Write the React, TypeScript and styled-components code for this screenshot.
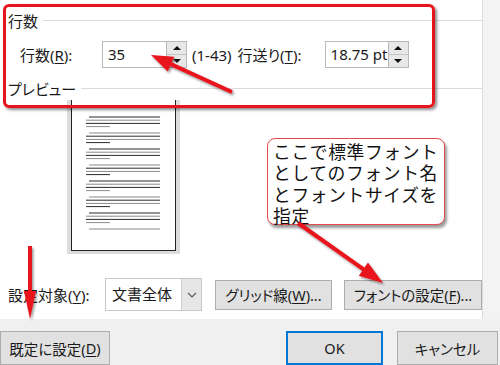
import styled, { createGlobalStyle } from 'styled-components';

const GlobalStyle = createGlobalStyle`
  html, body {
    margin: 0;
    padding: 0;
    background: #f0f0f0;
  }
  * {
    box-sizing: border-box;
  }
`;

const Window = styled.div`
  position: relative;
  width: 500px;
  height: 365px;
  overflow: hidden;
  display: flex;
  flex-direction: column;
  font-family: "Noto Sans", "Noto Sans CJK JP", sans-serif;
  font-feature-settings: "palt";
  font-size: 15px;
  color: #1a1a1a;
  background: #f0f0f0;
`;

const Body = styled.div`
  display: flex;
  height: 321px;
`;

const Panel = styled.div`
  width: 483px;
  height: 100%;
  background: #fff;
  border-right: 1px solid #dcdcdc;
  padding: 12px 0 0 8px;
  display: flex;
  flex-direction: column;
`;

const Strip = styled.div`
  flex: 1;
  background: #f3f3f3;
`;

const GroupHeader = styled.div<{ $top?: number }>`
  display: flex;
  align-items: center;
  gap: 5px;
  height: 16px;
  margin-top: ${(p) => p.$top ?? 0}px;
  white-space: nowrap;
  &::after {
    content: '';
    flex: 1;
    height: 1px;
    background: #dcdcdc;
  }
`;

const FieldRow = styled.div`
  display: flex;
  align-items: center;
  height: 27px;
  margin-top: 13px;
  padding-left: 12px;
`;

const Label = styled.span<{ $width?: number; $gap?: number }>`
  width: ${(p) => (p.$width ? `${p.$width}px` : 'auto')};
  margin-left: ${(p) => p.$gap ?? 0}px;
  white-space: nowrap;
  flex-shrink: 0;
`;

const Key = styled.span`
  text-decoration: underline;
  text-underline-offset: 2px;
`;

const Spin = styled.div<{ $width: number }>`
  display: flex;
  width: ${(p) => p.$width}px;
  height: 27px;
  flex-shrink: 0;
`;

const SpinInput = styled.div`
  flex: 1;
  border: 1px solid #b9b9b9;
  border-right: none;
  background: #fff;
  font-size: 15px;
  line-height: 25px;
  padding-left: 5px;
  white-space: nowrap;
`;

const SpinButtons = styled.div`
  width: 21px;
  display: flex;
  flex-direction: column;
  border: 1px solid #b9b9b9;
`;

const SpinButton = styled.div<{ $down?: boolean }>`
  flex: 1;
  background: #e8e8e8;
  border-top: ${(p) => (p.$down ? '1px solid #c4c4c4' : 'none')};
  display: flex;
  align-items: center;
  justify-content: center;
  &::before {
    content: '';
    border-left: 4px solid transparent;
    border-right: 4px solid transparent;
    ${(p) =>
      p.$down ? 'border-top: 4px solid #111;' : 'border-bottom: 4px solid #111;'}
  }
`;

const PreviewFrame = styled.div`
  margin: 4px 0 0 59px;
  width: 113px;
  height: 154px;
  background: #dcdcdc;
  padding: 0 4px 3px 4px;
`;

const PreviewPage = styled.div`
  width: 100%;
  height: 100%;
  background: #fff;
  border: 1px solid #222;
  border-top: none;
`;

const BottomRow = styled.div`
  display: flex;
  align-items: center;
  margin-top: 24px;
  height: 33px;
`;

const Select = styled.div`
  display: flex;
  width: 97px;
  height: 33px;
  margin-left: 12px;
  border: 1px solid #c8c8c8;
  background: #fff;
`;

const SelectText = styled.div`
  flex: 1;
  font-size: 15px;
  line-height: 31px;
  padding-left: 6px;
`;

const SelectArrow = styled.div`
  width: 20px;
  background: #e6e6e6;
  border-left: 1px solid #d0d0d0;
  display: flex;
  align-items: center;
  justify-content: center;
`;

const Button = styled.div<{ $width: number; $gap?: number; $primary?: boolean }>`
  width: ${(p) => p.$width}px;
  height: ${(p) => (p.$primary !== undefined ? 34 : 30)}px;
  margin-left: ${(p) => p.$gap ?? 0}px;
  flex-shrink: 0;
  background: #e1e1e1;
  border: 1px solid ${(p) => (p.$primary ? '#0078d7' : '#adadad')};
  box-shadow: ${(p) => (p.$primary ? 'inset 0 0 0 1px #0078d7' : 'none')};
  display: flex;
  align-items: center;
  justify-content: center;
  white-space: nowrap;
  font-size: 14.5px;
`;

const Footer = styled.div`
  flex: 1;
  display: flex;
  align-items: flex-start;
  padding-top: 12px;
`;

const RedFrame = styled.div`
  position: absolute;
  left: 3px;
  top: 4px;
  width: 432px;
  height: 104px;
  border: 3px solid #e8141c;
  border-radius: 6px;
  box-shadow: 2px 2px 3px rgba(0, 0, 0, 0.45);
`;

const Callout = styled.div`
  position: absolute;
  left: 267px;
  top: 138px;
  width: 178px;
  height: 87px;
  background: #fff;
  border: 1.5px solid #e44a4f;
  border-radius: 8px;
  box-shadow: 2px 3px 3px rgba(0, 0, 0, 0.4);
  padding: 2px 0 0 5px;
  font-family: "Noto Sans CJK JP", sans-serif;
  font-feature-settings: normal;
  font-size: 17.8px;
  line-height: 21.4px;
  color: #111;
  letter-spacing: 0.6px;
`;

const Overlay = styled.svg`
  position: absolute;
  left: 0;
  top: 0;
  pointer-events: none;
`;

const PageLines = () => {
  const rows: JSX.Element[] = [];
  for (let p = 0; p < 8; p++) {
    const y0 = 17 + p * 16;
    const lines = p === 7 ? 1 : 4;
    for (let i = 0; i < lines; i++) {
      const y = y0 + i * 3.2;
      const x1 = i === 0 ? 17 : 14;
      const x2 = i === 3 ? 38 : 88;
      const dark = (p + i) % 2 === 0;
      rows.push(
        <line
          key={`${p}-${i}`}
          x1={x1}
          x2={x2}
          y1={y}
          y2={y}
          stroke={dark ? '#2a2a2a' : '#8a8a8a'}
          strokeWidth={1}
        />
      );
    }
  }
  return (
    <svg width="103" height="150" viewBox="0 0 103 150">
      {rows}
    </svg>
  );
};

const Arrow = ({ from, to, head = 22, half = 8 }: { from: [number, number]; to: [number, number]; head?: number; half?: number }) => {
  const dx = to[0] - from[0];
  const dy = to[1] - from[1];
  const len = Math.hypot(dx, dy);
  const ux = dx / len;
  const uy = dy / len;
  const bx = to[0] - ux * head;
  const by = to[1] - uy * head;
  const px = -uy * half;
  const py = ux * half;
  return (
    <g filter="url(#shadow)">
      <line x1={from[0]} y1={from[1]} x2={bx + ux * 2} y2={by + uy * 2} stroke="#e8141c" strokeWidth={4} />
      <polygon
        points={`${to[0]},${to[1]} ${bx + px},${by + py} ${bx - px},${by - py}`}
        fill="#e8141c"
      />
    </g>
  );
};

export default function App() {
  return (
    <>
      <GlobalStyle />
      <Window>
        <Body>
          <Panel>
            <GroupHeader>行数</GroupHeader>
            <FieldRow>
              <Label $width={82}>
                行数(<Key>R</Key>):
              </Label>
              <Spin $width={85}>
                <SpinInput>35</SpinInput>
                <SpinButtons>
                  <SpinButton />
                  <SpinButton $down />
                </SpinButtons>
              </Spin>
              <Label $gap={5}>(1-43)</Label>
              <Label $gap={6} $width={87}>
                行送り(<Key>T</Key>):
              </Label>
              <Spin $width={84}>
                <SpinInput>18.75 pt</SpinInput>
                <SpinButtons>
                  <SpinButton />
                  <SpinButton $down />
                </SpinButtons>
              </Spin>
            </FieldRow>
            <GroupHeader $top={12}>プレビュー</GroupHeader>
            <PreviewFrame>
              <PreviewPage>
                <PageLines />
              </PreviewPage>
            </PreviewFrame>
            <BottomRow>
              <Label $width={85}>
                設定対象(<Key>Y</Key>):
              </Label>
              <Select>
                <SelectText>文書全体</SelectText>
                <SelectArrow>
                  <svg width="10" height="6" viewBox="0 0 10 6">
                    <path d="M1 1 L5 5 L9 1" fill="none" stroke="#555" strokeWidth="1.1" />
                  </svg>
                </SelectArrow>
              </Select>
              <Button $width={117} $gap={13}>
                グリッド線(<Key>W</Key>)...
              </Button>
              <Button $width={138} $gap={12}>
                フォントの設定(<Key>F</Key>)...
              </Button>
            </BottomRow>
          </Panel>
          <Strip />
        </Body>
        <Footer>
          <Button $width={110} $primary={false}>
            既定に設定(<Key>D</Key>)
          </Button>
          <Button $width={97} $gap={176} $primary>
            OK
          </Button>
          <Button $width={101} $gap={14} $primary={false}>
            キャンセル
          </Button>
        </Footer>
        <RedFrame />
        <Callout>
          ここで標準フォント
          <br />
          としてのフォント名
          <br />
          とフォントサイズを
          <br />
          指定
        </Callout>
        <Overlay width="500" height="365" viewBox="0 0 500 365">
          <defs>
            <filter id="shadow" x="-20%" y="-20%" width="140%" height="140%">
              <feDropShadow dx="1.5" dy="2" stdDeviation="1.2" floodColor="#000" floodOpacity="0.4" />
            </filter>
          </defs>
          <Arrow from={[232, 92]} to={[151, 55]} />
          <Arrow from={[298, 223]} to={[383, 283]} head={24} />
          <Arrow from={[30, 246]} to={[30, 319]} head={28} half={6} />
        </Overlay>
      </Window>
    </>
  );
}
